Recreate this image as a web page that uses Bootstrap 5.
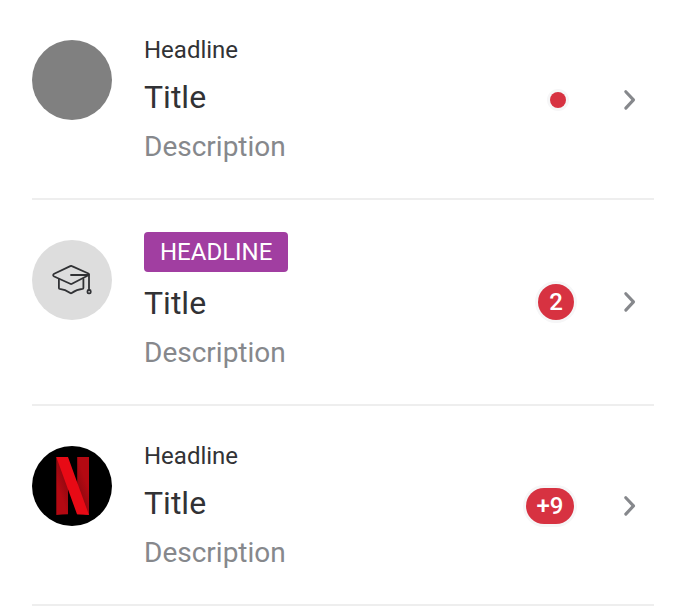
<!DOCTYPE html>
<html lang="en">
<head>
<meta charset="utf-8">
<meta name="viewport" content="width=device-width, initial-scale=1">
<title>List rows</title>
<link href="https://cdn.jsdelivr.net/npm/bootstrap@5.3.0/dist/css/bootstrap.min.css" rel="stylesheet">
<style>
body { font-family: Roboto, sans-serif; color: #313235; background: #fff; overflow: hidden; }
.rows { padding: 0 32px; }
.row-item { height: 200px; border-bottom: 2px solid #eee; gap: 32px; }
.row-tagged { height: 206px; }
.asset { width: 80px; height: 80px; margin-top: 40px; }
.asset-plain { background: #808080; }
.asset-icon { background: #ddd; }
.asset-brand { background: #000; }
.copy { padding-top: 32px; }
.kicker { font-size: 24px; line-height: 36px; }
.name { font-size: 32px; line-height: 40px; margin-top: 9px; }
.note { font-size: 28px; line-height: 40px; margin-top: 10px; color: #86888c; }
.tag { font-size: 24px; line-height: 40px; height: 40px; padding: 0 16px; border-radius: 4px; background: #a13ea1; color: #fff; }
.row-tagged .name { margin-top: 11px; }
.trail { height: 200px; padding-right: 8px; gap: 40px; }
.row-tagged .trail { height: 204px; }
.pip { background: #d73241; color: #fff; box-shadow: 0 0 0 3px #f6f6f7; font-size: 24px; line-height: 36px; height: 36px; min-width: 36px; font-weight: 500; }
.pip-wide { width: 48px; }
.pip-dot { width: 16px; height: 16px; min-width: 0; margin-right: 8px; }
</style>
<script src="https://cdn.jsdelivr.net/npm/bootstrap@5.3.0/dist/js/bootstrap.bundle.min.js"></script>
</head>
<body>
<main class="rows">
  <div class="row-item d-flex align-items-start">
    <div class="asset asset-plain rounded-circle flex-shrink-0"></div>
    <div class="copy flex-grow-1">
      <div class="kicker">Headline</div>
      <div class="name">Title</div>
      <div class="note">Description</div>
    </div>
    <div class="trail d-flex align-items-center">
      <span class="pip pip-dot rounded-circle"></span>
      <svg width="32" height="32" viewBox="0 0 32 32" fill="none" stroke="#86888c" stroke-width="3.1" stroke-linecap="round" stroke-linejoin="round"><path d="M11.800 7.700 19.500 15.900l-7.700 8.200"/></svg>
    </div>
  </div>
  <div class="row-item row-tagged d-flex align-items-start">
    <div class="asset asset-icon rounded-circle flex-shrink-0">
      <svg class="d-block" width="80" height="80" viewBox="0 0 80 80" fill="none" stroke="#313235" stroke-width="1.8" stroke-linecap="round" stroke-linejoin="round">
        <path d="M38.300 26.100q.8-.4 1.600 0L56.400 33.500q1.300.8 0 1.700L40 43.800q-.9.500-1.800 0L22.200 36.500q-2.100-1.300 0-2.700z"/>
        <path d="M39 35h18v14.800M26.900 39v9q0 .8.800.900 5.400.4 10.600 4.200.7.500 1.400 0 5.200-3.800 10.800-4.200.9-.1.9-.9V39"/>
        <rect x="55.500" y="50" width="3.200" height="3.400" rx="1.200"/>
      </svg>
    </div>
    <div class="copy flex-grow-1">
      <div class="tag d-inline-block align-top">HEADLINE</div>
      <div class="name">Title</div>
      <div class="note">Description</div>
    </div>
    <div class="trail d-flex align-items-center">
      <span class="pip rounded-pill text-center">2</span>
      <svg width="32" height="32" viewBox="0 0 32 32" fill="none" stroke="#86888c" stroke-width="3.1" stroke-linecap="round" stroke-linejoin="round"><path d="M11.800 7.700 19.500 15.900l-7.700 8.200"/></svg>
    </div>
  </div>
  <div class="row-item d-flex align-items-start">
    <div class="asset asset-brand rounded-circle flex-shrink-0">
      <svg class="d-block" width="80" height="80" viewBox="0 0 80 80">
        <defs>
          <linearGradient id="ribbonShade" gradientUnits="userSpaceOnUse" x1="27" y1="44.500" x2="54" y2="35">
            <stop offset="0" stop-color="#b40912"/><stop offset=".3" stop-color="#980810"/><stop offset=".7" stop-color="#980810"/><stop offset="1" stop-color="#b40912"/>
          </linearGradient>
        </defs>
        <path fill="url(#ribbonShade)" d="M24.300 11.100h11.700v57.200q-6 .1-11.700.7zM45.200 11.100h11.800v57.900q-6-.6-11.800-.7z"/>
        <path fill="#e80a15" d="M24.300 11.100h11.700l21 57.900q-6-.7-12-.8z"/>
      </svg>
    </div>
    <div class="copy flex-grow-1">
      <div class="kicker">Headline</div>
      <div class="name">Title</div>
      <div class="note">Description</div>
    </div>
    <div class="trail d-flex align-items-center">
      <span class="pip pip-wide rounded-pill text-center">+9</span>
      <svg width="32" height="32" viewBox="0 0 32 32" fill="none" stroke="#86888c" stroke-width="3.1" stroke-linecap="round" stroke-linejoin="round"><path d="M11.800 7.700 19.500 15.900l-7.700 8.200"/></svg>
    </div>
  </div>
</main>
</body>
</html>
